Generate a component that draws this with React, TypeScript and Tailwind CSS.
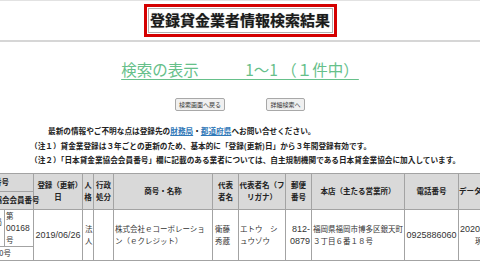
const jp = { fontFamily: '"Noto Sans CJK JP", "Liberation Sans", sans-serif' };
const num = { fontFamily: '"Liberation Sans", "Noto Sans CJK JP", sans-serif' };

const colWidths = [50, 29, 49, 11, 20, 99, 26, 47, 26, 93, 54, 48];

export default function App() {
  const th = 'border border-[#a3a3a3] bg-[#d9d9d9] px-[2px] text-center align-middle font-bold text-[7.5px] leading-[12px] text-[#222]';
  const td = 'border border-[#a3a3a3] bg-white px-[1px] align-middle text-[7.5px] leading-[12px] text-[#333]';

  return (
    <div className="w-[480px] h-[270px] overflow-hidden bg-white" style={jp}>
      <div className="h-[1px] bg-[#e2e2e2]" />

      <div className="flex justify-center pt-[3px]">
        <div className="w-[193px] h-[33px] border-[3px] border-[#d40000] p-[1px]">
          <div className="h-full border border-[#b0b0b0] bg-white flex items-center justify-center">
            <span className="text-[15px] font-bold text-[#1a1a1a] [text-shadow:0_0_1px_#888]">
              登録貸金業者情報検索結果
            </span>
          </div>
        </div>
      </div>

      <div className="mt-[3px] h-[2px] bg-[#d6d6d6]" />

      <div className="mt-[19px] flex justify-center">
        <span className="whitespace-pre text-[15.5px] leading-[17px] text-[#66c08a] underline underline-offset-[3px]">
          {'検索の表示　　　1～1 （１件中）'}
        </span>
      </div>

      <div className="mt-[20px] flex justify-center gap-[41px]">
        <button className="w-[50px] h-[13px] rounded-[2px] border border-[#a8a8a8] bg-[#f0f0f0] text-[6px] leading-[11px] text-[#333]">
          検索画面へ戻る
        </button>
        <button className="w-[39px] h-[13px] rounded-[2px] border border-[#a8a8a8] bg-[#f0f0f0] text-[6px] leading-[11px] text-[#333]">
          詳細検索へ
        </button>
      </div>

      <div className="mt-[13px] pl-[30px] text-[7.65px] leading-[14.5px] font-bold text-[#222] whitespace-nowrap">
        <p className="pl-[18px]">
          最新の情報やご不明な点は登録先の
          <span className="text-[#2f78b8] underline">財務局</span>・
          <span className="text-[#2f78b8] underline">都道府県</span>
          へお問い合せください。
        </p>
        <p>（注１）貸金業登録は３年ごとの更新のため、基本的に「登録(更新)日」から３年間登録有効です。</p>
        <p>（注２）「日本貸金業協会会員番号」欄に記載のある業者については、自主規制機関である日本貸金業協会に加入しています。</p>
      </div>

      <div className="mt-[5px] w-[480px] overflow-hidden">
        <table className="-ml-[46px] table-fixed border-collapse" style={{ width: colWidths.reduce((a, b) => a + b, 0) }}>
          <colgroup>
            {colWidths.map((w, i) => (
              <col key={i} style={{ width: w }} />
            ))}
          </colgroup>
          <thead>
            <tr className="h-[18px]">
              <th colSpan={2} className={th + ' whitespace-nowrap'}>登録番号</th>
              <th rowSpan={2} className={th}>登録（更新）日</th>
              <th rowSpan={2} className={th + ' !px-0'}>人格</th>
              <th rowSpan={2} className={th + ' !px-0'}>行政処分</th>
              <th rowSpan={2} className={th}>商号・名称</th>
              <th rowSpan={2} className={th}>代表者名</th>
              <th rowSpan={2} className={th + ' !px-0'}>代表者名（フリガナ）</th>
              <th rowSpan={2} className={th}>郵便番号</th>
              <th rowSpan={2} className={th}>本店（主たる営業所）</th>
              <th rowSpan={2} className={th}>電話番号</th>
              <th rowSpan={2} className={th + ' !px-0 whitespace-nowrap text-left'}>データ更新日</th>
            </tr>
            <tr className="h-[18px]">
              <th colSpan={2} className={th + ' whitespace-nowrap !text-right !pr-[4px]'}>日本貸金業協会会員番号</th>
            </tr>
          </thead>
          <tbody>
            <tr className="h-[35px]">
              <td className={td + ' text-center'}>福岡財務支局長(1)</td>
              <td className={td}>
                第<br />
                <span className="text-[8.5px]" style={num}>00168</span>
                <br />号
              </td>
              <td rowSpan={2} className={td + ' text-center whitespace-nowrap'}>
                <span className="text-[9px]" style={num}>2019/06/26</span>
              </td>
              <td rowSpan={2} className={td + ' !px-[2px]'}>法人</td>
              <td rowSpan={2} className={td} />
              <td rowSpan={2} className={td}>株式会社ｅコーポレーション（ｅクレジット）</td>
              <td rowSpan={2} className={td + ' !px-[2px]'}>衛藤秀蔵</td>
              <td rowSpan={2} className={td}>エトウ　シュウゾウ</td>
              <td rowSpan={2} className={td + ' text-right'}>
                <span className="text-[9px]" style={num}>812-0879</span>
              </td>
              <td rowSpan={2} className={td}>福岡県福岡市博多区銀天町３丁目６番１８号</td>
              <td rowSpan={2} className={td + ' text-center'}>
                <span className="text-[9px]" style={num}>0925886060</span>
              </td>
              <td rowSpan={2} className={td + ' text-center whitespace-nowrap'}>
                <span className="text-[9px]" style={num}>2020/05/27</span>
                <br />現在
              </td>
            </tr>
            <tr className="h-[14px]">
              <td colSpan={2} className={td + ' text-right !pr-[22px] whitespace-nowrap'}>第001220号</td>
            </tr>
          </tbody>
        </table>
      </div>
    </div>
  );
}
